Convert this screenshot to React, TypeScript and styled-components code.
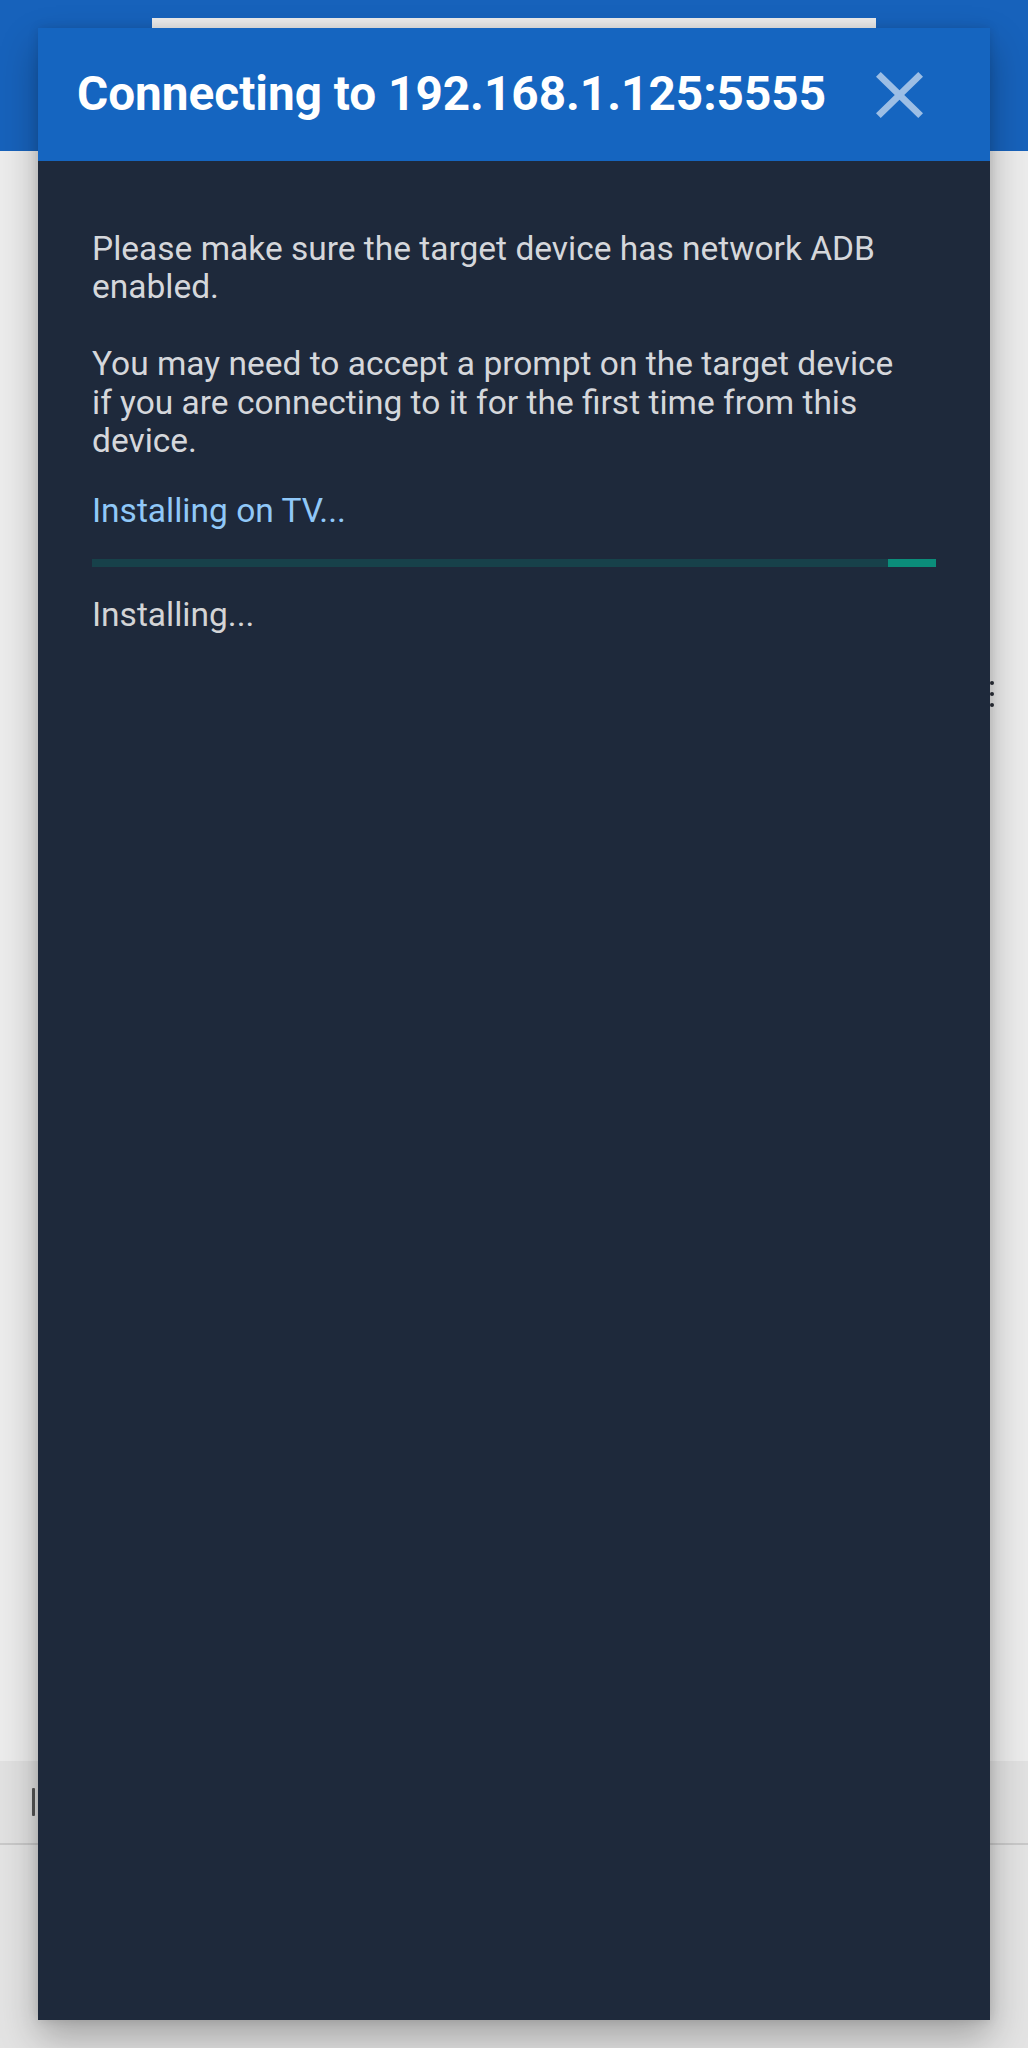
import React from "react";
import styled, { createGlobalStyle } from "styled-components";

const GlobalStyle = createGlobalStyle`
  html, body {
    margin: 0;
    padding: 0;
    background: #ececec;
    font-family: Roboto, "Noto Sans", "Liberation Sans", sans-serif;
  }
  * { box-sizing: border-box; }
`;

const Page = styled.div`
  position: relative;
  width: 1028px;
  height: 2048px;
  overflow: hidden;
  display: flex;
  flex-direction: column;
  background: #ececec;
`;

const AppBar = styled.div`
  height: 151px;
  flex: none;
  background: #1762bb;
`;

const Content = styled.div`
  flex: 1;
  display: flex;
  flex-direction: column;
`;

const ListRow = styled.div`
  display: flex;
  justify-content: flex-end;
  padding: 530px 34px 0 0;
`;

const MenuDots = styled.div`
  display: flex;
  flex-direction: column;
  gap: 7px;
`;

const Dot = styled.span`
  width: 4px;
  height: 4px;
  border-radius: 50%;
  background: #2a2f38;
`;

const Spacer = styled.div`
  flex: 1;
`;

const InputBar = styled.div`
  height: 84px;
  flex: none;
  display: flex;
  align-items: center;
  padding-left: 32px;
  background: #e1e1e1;
  border-bottom: 2px solid #c9c9c9;
`;

const Cursor = styled.span`
  width: 3px;
  height: 28px;
  border-radius: 1px;
  background: #555;
`;

const Bottom = styled.div`
  height: 203px;
  flex: none;
  background: #e3e3e3;
`;

const SheetEdge = styled.div`
  position: absolute;
  left: 152px;
  top: 18px;
  width: 724px;
  height: 10px;
  background: #ebebeb;
`;

const Dialog = styled.div`
  position: absolute;
  left: 38px;
  top: 28px;
  width: 952px;
  height: 1992px;
  display: flex;
  flex-direction: column;
  background: #1e293b;
  box-shadow: 0 18px 36px rgba(0, 0, 0, 0.28), 0 0 10px rgba(0, 0, 0, 0.12);
`;

const Header = styled.div`
  height: 133px;
  flex: none;
  display: flex;
  align-items: center;
  justify-content: space-between;
  padding: 0 67px 0 39px;
  background: #1565c0;
`;

const Title = styled.h1`
  margin: 0;
  font-size: 47.7px;
  line-height: 1;
  font-weight: 700;
  color: #ffffff;
  white-space: nowrap;
`;

const CloseButton = styled.button`
  width: 47px;
  height: 46px;
  padding: 0;
  border: 0;
  background: none;
  display: flex;
  margin-top: 1px;
  svg { width: 47px; height: 46px; display: block; }
`;

const Body = styled.div`
  flex: 1;
  padding: 69px 54px 0 54px;
  display: flex;
  flex-direction: column;
`;

const Message = styled.p<{ $color?: string; $gap?: number }>`
  margin: ${(p) => p.$gap ?? 0}px 0 0 0;
  max-width: 805px;
  font-size: 33.5px;
  line-height: 38.4px;
  color: ${(p) => p.$color ?? "#d5d7db"};
  white-space: pre-wrap;
`;

const Track = styled.div`
  margin-top: 28px;
  height: 8px;
  display: flex;
  justify-content: flex-end;
  background: #17414a;
`;

const Fill = styled.div`
  width: 48px;
  height: 100%;
  background: #0b8d7a;
`;

export default function App() {
  return (
    <>
      <GlobalStyle />
      <Page>
        <AppBar />
        <Content>
          <ListRow>
            <MenuDots>
              <Dot />
              <Dot />
              <Dot />
            </MenuDots>
          </ListRow>
          <Spacer />
          <InputBar>
            <Cursor />
          </InputBar>
          <Bottom />
        </Content>
        <SheetEdge />
        <Dialog>
          <Header>
            <Title>Connecting to 192.168.1.125:5555</Title>
            <CloseButton aria-label="Close">
              <svg viewBox="5 5 14 14" preserveAspectRatio="none">
                <path
                  fill="rgba(255,255,255,0.58)"
                  d="M19 6.41L17.59 5 12 10.59 6.41 5 5 6.41 10.59 12 5 17.59 6.41 19 12 13.41 17.59 19 19 17.59 13.41 12z"
                />
              </svg>
            </CloseButton>
          </Header>
          <Body>
            <Message>
              {"Please make sure the target device has network ADB enabled.\n\nYou may need to accept a prompt on the target device if you are connecting to it for the first time from this device."}
            </Message>
            <Message $color="#90c8f8" $gap={32}>
              Installing on TV...
            </Message>
            <Track>
              <Fill />
            </Track>
            <Message $color="#d3d4d6" $gap={29}>
              Installing...
            </Message>
          </Body>
        </Dialog>
      </Page>
    </>
  );
}
